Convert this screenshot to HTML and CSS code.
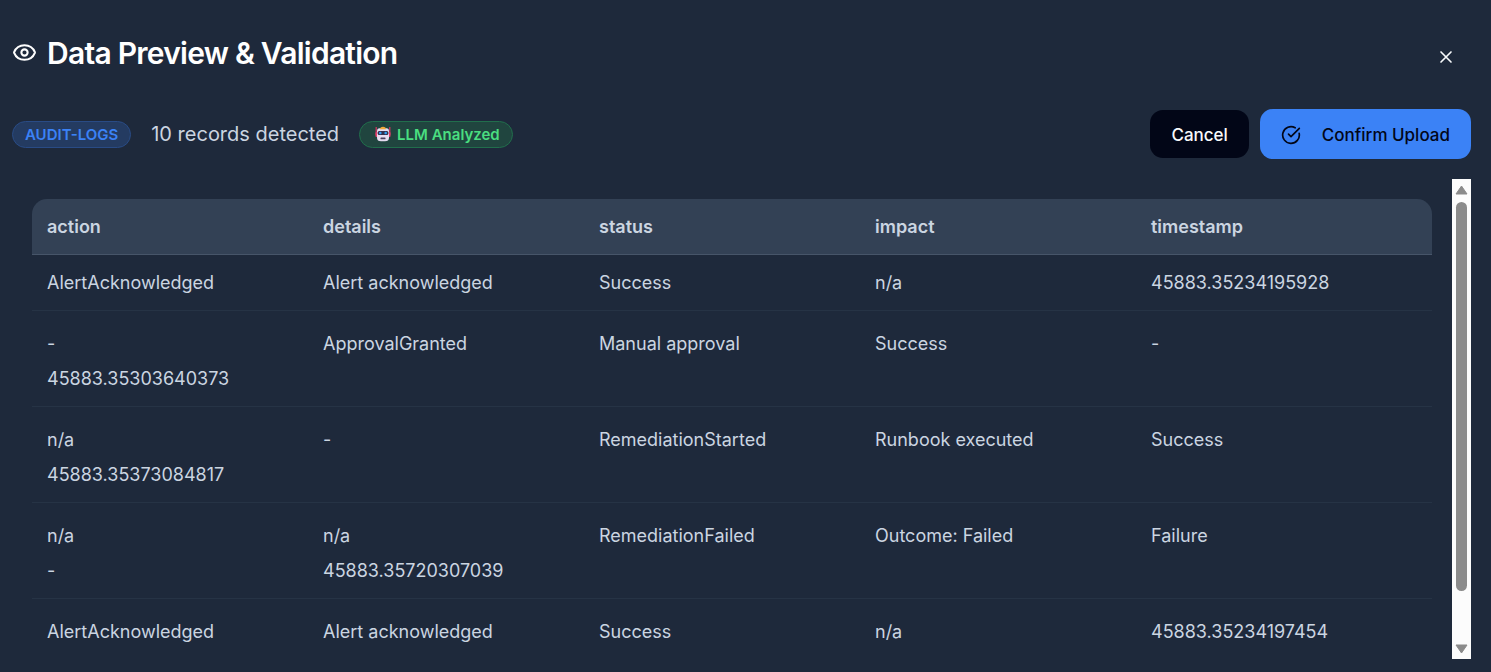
FILE: index.html
```html
<!DOCTYPE html>
<html lang="en">
<head>
<meta charset="utf-8">
<title>Data Preview &amp; Validation</title>
<link rel="stylesheet" href="styles.css">
</head>
<body>
<main class="dialog">
  <header class="dialog-header">
    <h1 class="title">
      <svg class="eye" viewBox="0 0 24 24" fill="none" stroke="currentColor" stroke-width="2" stroke-linecap="round" stroke-linejoin="round" aria-hidden="true"><path d="M2.06 12.35a1 1 0 0 1 0-.7 10.75 10.75 0 0 1 19.88 0 1 1 0 0 1 0 .7 10.75 10.75 0 0 1-19.88 0"/><circle cx="12" cy="12" r="3"/></svg>
      <span>Data Preview &amp; Validation</span>
    </h1>
    <button class="close" type="button" aria-label="Close">
      <svg viewBox="0 0 24 24" fill="none" stroke="currentColor" stroke-width="2" stroke-linecap="round" aria-hidden="true"><path d="M18 6 6 18M6 6l12 12"/></svg>
    </button>
  </header>
  <section class="toolbar">
    <div class="summary">
      <span class="badge badge-blue">AUDIT-LOGS</span>
      <span class="count">10 records detected</span>
      <span class="badge badge-green">
        <svg class="robot" viewBox="0 0 16 16" aria-hidden="true">
          <path d="M1.200 1v8M14.800 1v8" stroke="#d83262" stroke-width="1.200"/>
          <rect x="0.500" y="6" width="2" height="5" rx="1" fill="#e83e6c"/><rect x="13.500" y="6" width="2" height="5" rx="1" fill="#e83e6c"/>
          <path d="M4.500 2.300h7q2.500 0 2.500 3v6.500q0 3.500-4 3.500H6q-4 0-4-3.500V5.300q0-3 2.500-3z" fill="#e6dcf0"/>
          <path d="M5 3.200Q5 .7 8 .7t3 2.500z" fill="#f2a93b"/>
          <rect x="2.600" y="5" width="10.800" height="4" rx="1.500" fill="#35304d"/>
          <circle cx="5.300" cy="7" r="1.300" fill="#329df0"/><circle cx="10.700" cy="7" r="1.300" fill="#329df0"/>
          <rect x="5.500" y="11.500" width="5" height="1.800" rx=".6" fill="#4b405e"/>
        </svg>
        <span>LLM Analyzed</span>
      </span>
    </div>
    <div class="actions">
      <button class="btn btn-dark" type="button">Cancel</button>
      <button class="btn btn-primary" type="button">
        <svg viewBox="0 0 24 24" fill="none" stroke="currentColor" stroke-width="2" stroke-linecap="round" stroke-linejoin="round" aria-hidden="true"><path d="M21.800 10A10 10 0 1 1 17 3.340"/><path d="m9 11 3 3L22 4"/></svg>
        <span>Confirm Upload</span>
      </button>
    </div>
  </section>
  <section class="scroller">
    <div class="viewport">
      <table class="records">
        <thead>
          <tr><th scope="col">action</th><th scope="col">details</th><th scope="col">status</th><th scope="col">impact</th><th scope="col">timestamp</th></tr>
        </thead>
        <tbody>
          <tr><td>AlertAcknowledged</td><td>Alert acknowledged</td><td>Success</td><td>n/a</td><td>45883.35234195928</td></tr>
          <tr class="wrapped"><td>-</td><td>ApprovalGranted</td><td>Manual approval</td><td>Success</td><td>-</td><td>45883.35303640373</td></tr>
          <tr class="wrapped"><td>n/a</td><td>-</td><td>RemediationStarted</td><td>Runbook executed</td><td>Success</td><td>45883.35373084817</td></tr>
          <tr class="wrapped"><td>n/a</td><td>n/a</td><td>RemediationFailed</td><td>Outcome: Failed</td><td>Failure</td><td>-</td><td>45883.35720307039</td></tr>
          <tr class="wrapped"><td>AlertAcknowledged</td><td>Alert acknowledged</td><td>Success</td><td>n/a</td><td>45883.35234197454</td></tr>
        </tbody>
      </table>
    </div>
    <div class="scrollbar" aria-hidden="true">
      <svg class="arrow" viewBox="0 0 13 10"><path d="M6.500 1 12 9H1z"/></svg>
      <div class="track"><div class="thumb"></div></div>
      <svg class="arrow" viewBox="0 0 13 10"><path d="M6.500 9 12 1H1z"/></svg>
    </div>
  </section>
</main>
</body>
</html>
```
FILE: styles.css
```css
* { box-sizing: border-box; }
body {
  margin: 0;
  background: #1e293b;
  color: #cbd5e1;
  font-family: Inter, "Liberation Sans", sans-serif;
}
.dialog {
  display: flex;
  flex-direction: column;
  height: 100vh;
  padding: 33px 20px 13px 12px;
}
.dialog-header {
  display: flex;
  justify-content: space-between;
  align-items: center;
  height: 40px;
}
.title {
  display: flex;
  align-items: center;
  gap: 10px;
  margin: 0;
  color: #fff;
  font-size: 30px;
  font-weight: 600;
  line-height: 40px;
  letter-spacing: -0.025em;
}
.eye { width: 25px; height: 25px; margin-bottom: 2px; }
.close {
  display: flex;
  margin-top: 8px;
  margin-right: 15px;
  padding: 0;
  border: 0;
  background: none;
  color: #f8fafc;
}
.close svg { width: 20px; height: 20px; }
.toolbar {
  display: flex;
  justify-content: space-between;
  align-items: center;
  margin-top: 36px;
}
.summary { display: flex; align-items: center; gap: 20px; }
.badge {
  display: flex;
  align-items: center;
  gap: 6px;
  height: 27px;
  padding: 0 12px;
  border: 1px solid;
  border-radius: 14px;
  font-size: 15px;
  font-weight: 600;
}
.badge-blue { color: #3b82f6; background: #243b61; border-color: #294b85; }
.badge-green { color: #4ade80; background: #20453f; border-color: #216e4c; }
.robot { width: 16px; height: 16px; margin-left: 3px; }
.count { font-size: 20px; }
.actions { display: flex; align-items: center; gap: 11px; }
.btn {
  display: flex;
  align-items: center;
  height: 48px;
  padding: 1px 21px 0;
  border: 0;
  border-radius: 13px;
  font-family: inherit;
  font-size: 17px;
  font-weight: 500;
}
.btn-dark { background: #020617; color: #f8fafc; }
.btn-primary { gap: 21px; height: 50px; background: #3b82f6; color: #020617; }
.btn-primary svg { width: 20px; height: 20px; }
.scroller {
  display: flex;
  flex: 1;
  min-height: 0;
  margin-top: 20px;
}
.viewport { flex: 1; padding: 20px 20px 0; overflow: hidden; }
.records { display: block; font-size: 18px; line-height: 25px; }
.records thead, .records tbody { display: block; }
.records tr {
  display: grid;
  grid-template-columns: repeat(5, 1fr);
  gap: 10px;
  padding: 15px;
  border-bottom: 1px solid #263345;
}
.records thead tr {
  background: #334155;
  border-bottom-color: #475569;
  border-radius: 15px 15px 0 0;
}
.records .wrapped {
  grid-template-rows: 25px 25px;
  padding-top: 20px;
}
.records th, .records td { padding: 0; text-align: left; }
.records th { font-weight: 600; }
.scrollbar {
  display: flex;
  flex-direction: column;
  align-items: center;
  gap: 7px;
  width: 19px;
  padding: 6px 0 5px;
  background: #fcfcfc;
}
.arrow { width: 13px; height: 10px; fill: #8b8b8b; stroke: #8b8b8b; stroke-linejoin: round; }
.track { flex: 1; width: 11px; }
.thumb { height: 89.5%; border-radius: 6px; background: #8b8b8b; }
```
